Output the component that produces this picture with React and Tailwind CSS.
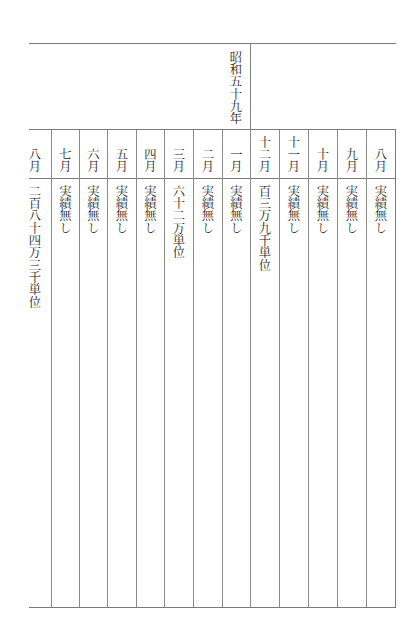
import React from "react";

const months = [
  { m: "八月", v: "実績無し", w: "w-[29px]" },
  { m: "九月", v: "実績無し", w: "w-[29px]" },
  { m: "十月", v: "実績無し", w: "w-[29px]" },
  { m: "十一月", v: "実績無し", w: "w-[29px]" },
  { m: "十二月", v: "百三万九千単位", w: "w-[29px]" },
  { m: "一月", v: "実績無し", w: "w-[28px]" },
  { m: "二月", v: "実績無し", w: "w-[29px]" },
  { m: "三月", v: "六十二万単位", w: "w-[29px]" },
  { m: "四月", v: "実績無し", w: "w-[28px]" },
  { m: "五月", v: "実績無し", w: "w-[29px]" },
  { m: "六月", v: "実績無し", w: "w-[28px]" },
  { m: "七月", v: "実績無し", w: "w-[28px]" },
];

const Tate = ({ children }) => (
  <span className="[writing-mode:vertical-rl] text-[12.3px] leading-[12px] text-[#1c1c1c]">
    {children}
  </span>
);

const App = () => {
  return (
    <div className="w-[406px] h-[631px] bg-white pt-[43px] pl-[29px] font-['Noto_Serif_CJK_JP','Noto_Sans_CJK_JP',serif] font-normal">
      <div className="w-[367px]">

        {/* header: 昭和五十九年 */}
        <div className="flex flex-row-reverse h-[86px] border-t border-[#7a7a7a]">
          <div className="w-[146px] border-l border-[#808080]" />
          <div className="flex-1 flex flex-row-reverse">
            <div className="w-[28px] flex justify-center pt-[7px]">
              <Tate>昭和五十九年</Tate>
            </div>
          </div>
        </div>

        {/* month table */}
        <div className="flex flex-row-reverse h-[479px] border-t border-r border-b border-[#7a7a7a]">
          {months.map((c, i) => (
            <div key={i} className={`${c.w} flex flex-col border-l border-[#8a8a8a]`}>
              <div className="h-[49px] border-b border-[#7a7a7a] flex items-end justify-center pb-[5px]">
                <Tate>{c.m}</Tate>
              </div>
              <div className="flex-1 flex justify-center pt-[6px]">
                <Tate>{c.v}</Tate>
              </div>
            </div>
          ))}
          <div className="flex-1 flex flex-col">
            <div className="h-[49px] border-b border-[#7a7a7a] flex items-end justify-start pb-[5px]">
              <Tate>八月</Tate>
            </div>
            <div className="flex-1 flex justify-start pt-[6px]">
              <Tate>二百八十四万三千単位</Tate>
            </div>
          </div>
        </div>

      </div>
    </div>
  );
};

export default App;
